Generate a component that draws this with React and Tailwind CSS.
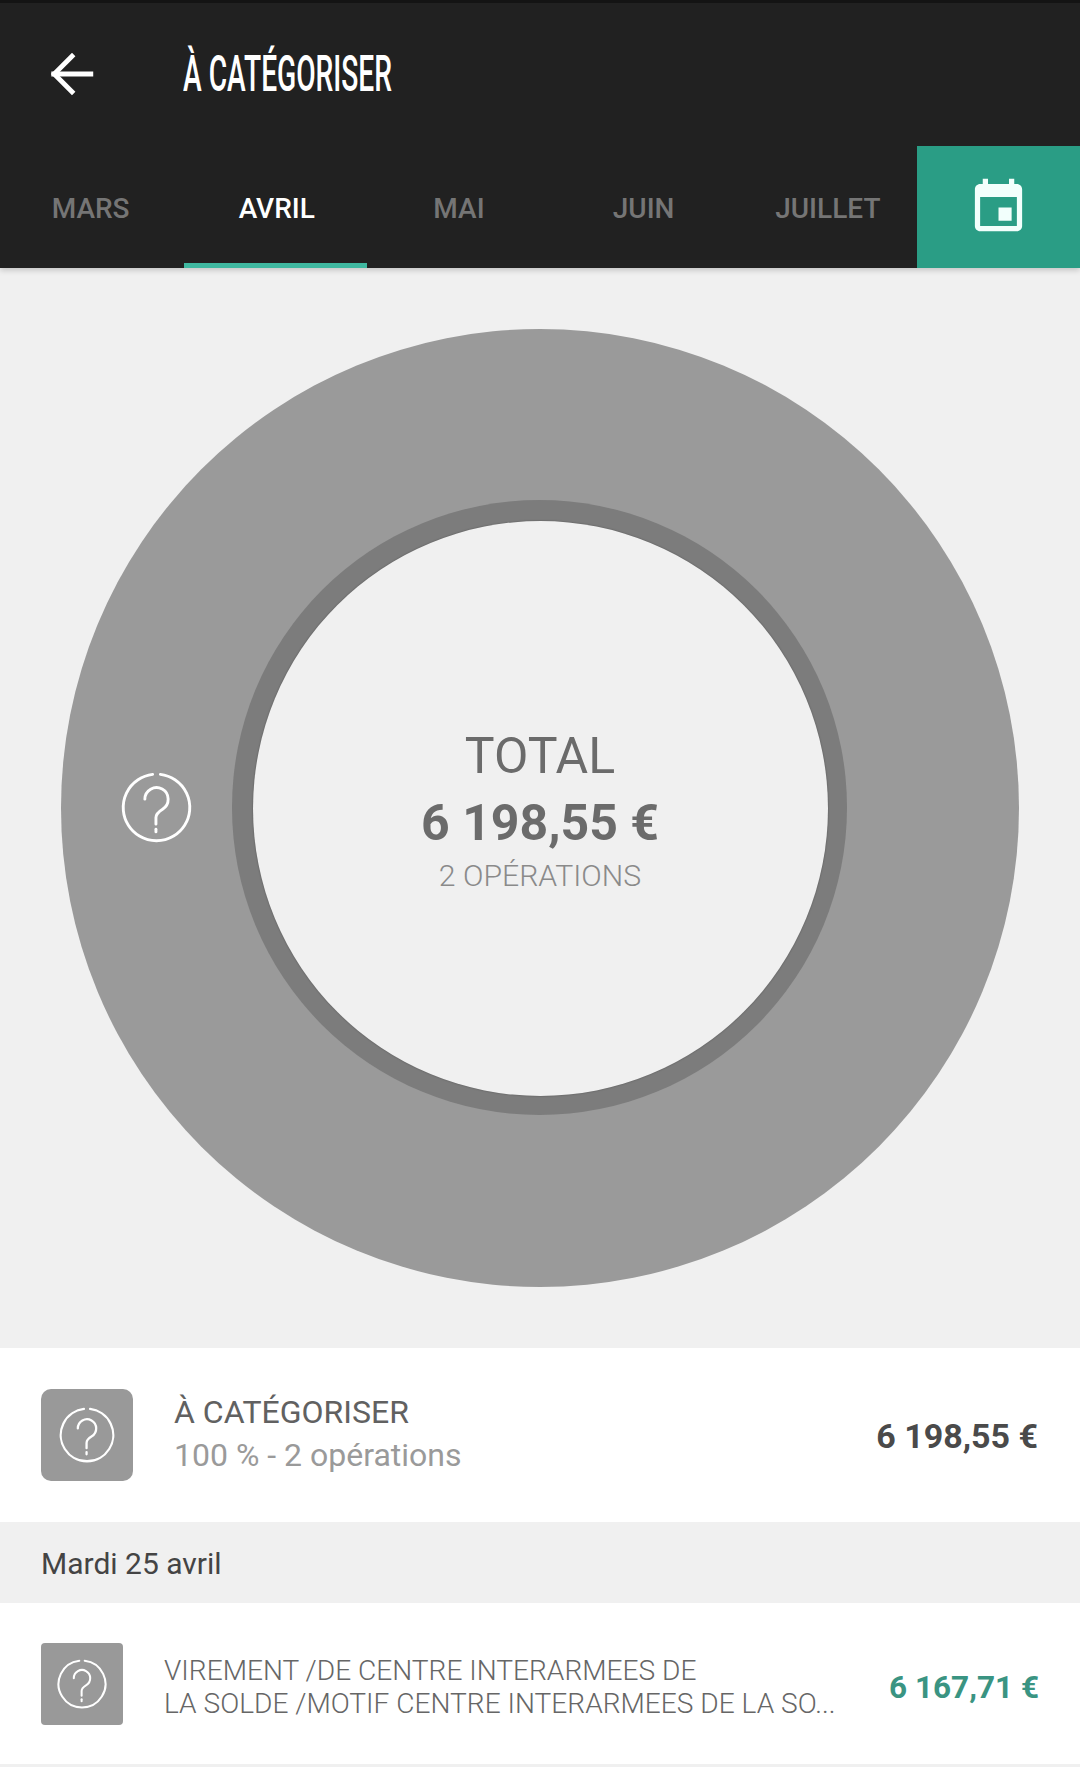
const months = [
  { label: "MARS", offset: "pr-[4px]" },
  { label: "AVRIL", offset: "pl-[2px]" },
  { label: "MAI", offset: "" },
  { label: "JUIN", offset: "pl-[3px]" },
  { label: "JUILLET", offset: "pl-[5px]" },
];

function QuestionIcon({ className }) {
  return (
    <svg viewBox="0 0 64 64" fill="none" stroke="currentColor" strokeWidth="2.6" strokeLinecap="round" className={className}>
      {/* ring with a small gap at the top */}
      <path d="M35.5 2.2A30 30 0 1 1 28.5 2.2" />
      <path d="M21.5 24.5A10.5 10.5 0 1 1 37.5 33.5C33.5 36 31.5 38 31.5 41V47" />
      <path d="M31.5 51.5V54" />
    </svg>
  );
}

function App() {
  return (
    <div className="w-[1080px] h-[1767px] overflow-hidden bg-[#f0f0f0] font-['Roboto',sans-serif]">
      <header className="relative z-10 h-[268px] bg-[#212121] border-t-[3px] border-[#141414] shadow-[0_2px_6px_rgba(0,0,0,0.2)] flex flex-col">
        <div className="h-[143px] flex items-center pl-[49px] pb-[2px]">
          <svg viewBox="0 0 44 44" fill="none" stroke="white" strokeWidth="4.6" strokeLinecap="square" className="w-[46px] h-[46px]">
            <path d="M4.5 22H40" />
            <path d="M22 5 5 22l17 17" />
          </svg>
          <h1 className="ml-[88px] text-[50px] leading-none font-medium text-white origin-left scale-x-[0.563] whitespace-nowrap">
            À CATÉGORISER
          </h1>
        </div>
        <nav className="flex flex-1 pl-[1px]">
          {months.map((m) => (
            <div
              key={m.label}
              className={`w-[183.2px] shrink-0 flex items-center justify-center pt-[8px] text-[28px] font-medium border-b-[5px] ${m.offset} ${
                m.label === "AVRIL" ? "text-white border-[#3fb8a0]" : "text-[#757575] border-transparent"
              }`}
            >
              {m.label}
            </div>
          ))}
          <div className="w-[163px] bg-[#2a9d85] flex items-center justify-center">
            <svg viewBox="0 0 24 24" fill="#f2fffc" className="w-[63px] h-[63px]">
              <path d="M17 12h-5v5h5v-5zM16 1v2H8V1H6v2H5c-1.11 0-1.99.9-1.99 2L3 19c0 1.1.89 2 2 2h14c1.1 0 2-.9 2-2V5c0-1.1-.9-2-2-2h-1V1h-2zm3 18H5V8h14v11z" />
            </svg>
          </div>
        </nav>
      </header>

      <main className="h-[1080px] flex justify-center items-center">
        <div className="relative w-[958px] h-[958px] rounded-full bg-[#9a9a9a] flex items-center justify-center">
          <QuestionIcon className="absolute left-[60px] top-[443px] w-[71px] h-[71px] text-white" />
          <div className="w-[615px] h-[615px] mr-[2px] mb-[2px] rounded-full bg-[#7c7c7c] flex items-center justify-center">
            <div className="w-[575px] h-[575px] ml-[2px] mt-[2px] pt-[6px] rounded-full bg-[#f0f0f0] shadow-[0_0_2px_rgba(0,0,0,0.35)] flex flex-col items-center justify-center">
              <div className="text-[50px] leading-[56px] font-normal text-[#6b6b6b]">TOTAL</div>
              <div className="text-[50px] leading-[56px] mt-[11px] font-bold text-[#6b6b6b]">6 198,55 €</div>
              <div className="text-[30.2px] leading-[36px] mt-[7px] font-light text-[#8a8a8a]">2 OPÉRATIONS</div>
            </div>
          </div>
        </div>
      </main>

      <section className="h-[174px] bg-white flex items-center pl-[41px] pr-[42px]">
        <div className="w-[92px] h-[92px] rounded-[10px] bg-[#999999] flex items-center justify-center text-white">
          <QuestionIcon className="w-[56px] h-[56px]" />
        </div>
        <div className="ml-[41px] flex-1 pb-[2px]">
          <div className="text-[32px] leading-[43px] text-[#616161]">À CATÉGORISER</div>
          <div className="text-[32px] leading-[43px] text-[#9a9a9a]">100 % - 2 opérations</div>
        </div>
        <div className="text-[34px] pt-[3px] font-bold text-[#4a4a4a]">6 198,55 €</div>
      </section>

      <div className="h-[81px] flex items-center pl-[41px] pt-[2px] text-[30px] text-[#444444]">Mardi 25 avril</div>

      <section className="h-[161px] bg-white flex items-center pl-[41px] pr-[41px]">
        <div className="w-[82px] h-[82px] rounded-[4px] bg-[#999999] flex items-center justify-center text-white">
          <QuestionIcon className="w-[50px] h-[50px]" />
        </div>
        <div className="ml-[41px] flex-1 min-w-0 pt-[6px] text-[28.1px] leading-[33px] font-light text-[#666666] whitespace-nowrap">
          <div>VIREMENT /DE CENTRE INTERARMEES DE</div>
          <div>LA SOLDE /MOTIF CENTRE INTERARMEES DE LA SO...</div>
        </div>
        <div className="text-[31.5px] pt-[9px] font-bold text-[#3a9482]">6 167,71 €</div>
      </section>
    </div>
  );
}

export default App;
